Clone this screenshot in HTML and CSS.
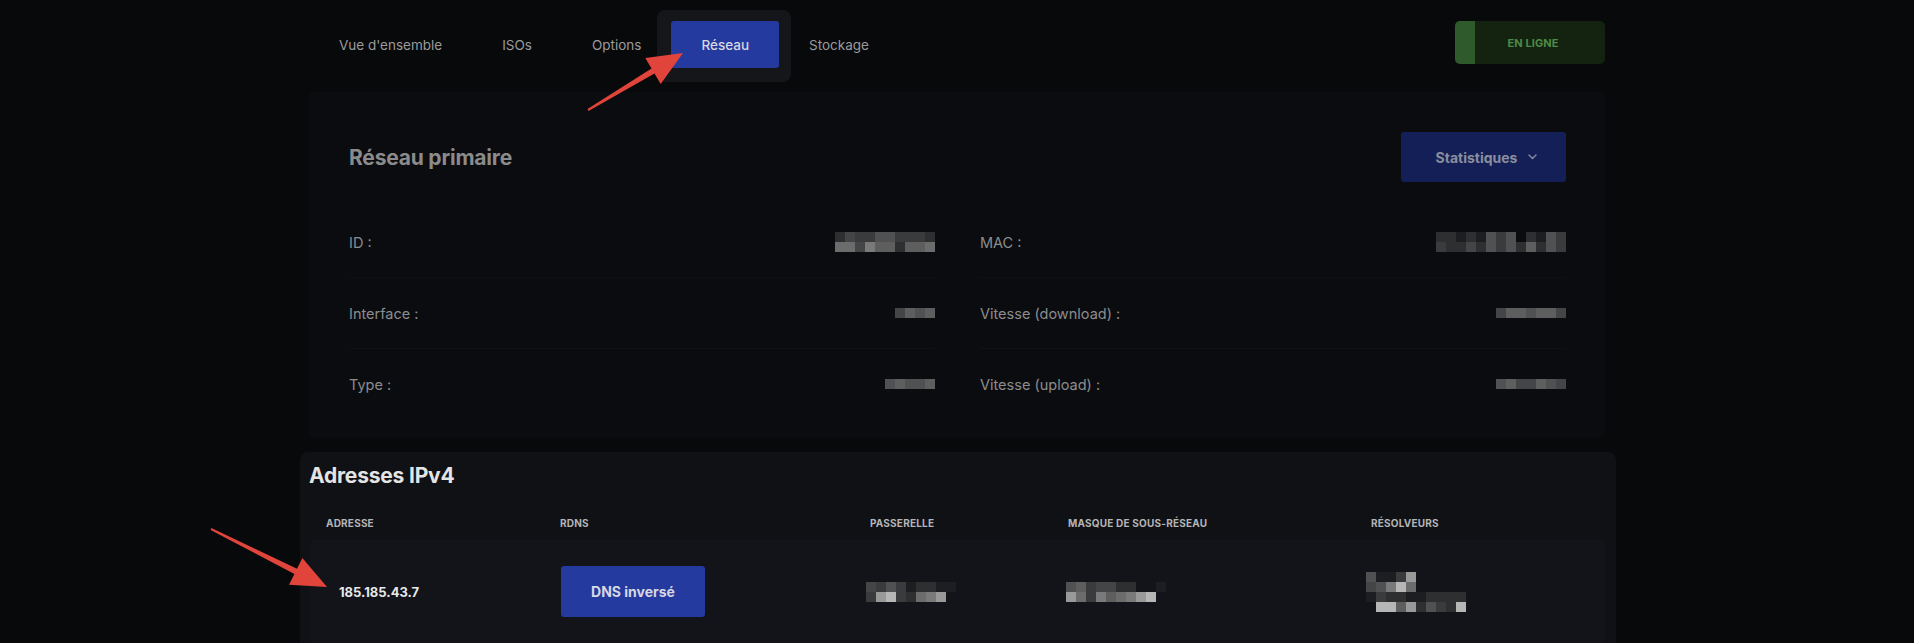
FILE: index.html
```html
<!DOCTYPE html>
<html lang="fr">
<head>
<meta charset="utf-8">
<title>Réseau</title>
<link rel="stylesheet" href="styles.css">
</head>
<body>
<div class="page">
  <header class="topbar">
    <nav class="tabs">
      <a class="tab">Vue d'ensemble</a>
      <a class="tab">ISOs</a>
      <a class="tab">Options</a>
      <span class="tab-hl"><a class="tab active">Réseau</a></span>
      <a class="tab">Stockage</a>
    </nav>
    <div class="status"><span class="status-bar"></span><span class="status-text">EN LIGNE</span></div>
  </header>

  <section class="panel">
    <div class="panel-head">
      <h2 class="panel-title">Réseau primaire</h2>
      <button class="stats-btn">Statistiques
        <svg class="chev" width="9" height="6" viewBox="0 0 9 6"><path d="M1 1l3.5 3.5L8 1" fill="none" stroke="#8a8e9e" stroke-width="1.4" stroke-linecap="round" stroke-linejoin="round"/></svg>
      </button>
    </div>
    <div class="kv-grid">
      <div class="kv"><span class="k">ID :</span>
        <span class="px c10"><i class="s2"></i><i class="s4"></i><i class="s3"></i><i class="s3"></i><i class="s5"></i><i class="s5"></i><i class="s3"></i><i class="s3"></i><i class="s3"></i><i class="s2"></i><i class="s7"></i><i class="s7"></i><i class="s4"></i><i class="s8"></i><i class="s6"></i><i class="s6"></i><i class="s2"></i><i class="s6"></i><i class="s6"></i><i class="s7"></i></span></div>
      <div class="kv"><span class="k">MAC :</span>
        <span class="px c13"><i class="s2"></i><i class="s2"></i><i class="s1"></i><i class="s2"></i><i class="s1"></i><i class="s5"></i><i class="s3"></i><i class="s5"></i><i class="s0"></i><i class="s2"></i><i class="s1"></i><i class="s5"></i><i class="s3"></i><i class="s3"></i><i class="s2"></i><i class="s2"></i><i class="s4"></i><i class="s2"></i><i class="s5"></i><i class="s3"></i><i class="s5"></i><i class="s2"></i><i class="s6"></i><i class="s2"></i><i class="s5"></i><i class="s3"></i></span></div>
      <div class="kv"><span class="k">Interface :</span>
        <span class="px c4"><i class="s4"></i><i class="s6"></i><i class="s5"></i><i class="s6"></i></span></div>
      <div class="kv"><span class="k">Vitesse (download) :</span>
        <span class="px c7"><i class="s4"></i><i class="s6"></i><i class="s6"></i><i class="s5"></i><i class="s6"></i><i class="s6"></i><i class="s4"></i></span></div>
      <div class="kv last"><span class="k">Type :</span>
        <span class="px c5"><i class="s5"></i><i class="s6"></i><i class="s5"></i><i class="s5"></i><i class="s6"></i></span></div>
      <div class="kv last"><span class="k">Vitesse (upload) :</span>
        <span class="px c7"><i class="s5"></i><i class="s6"></i><i class="s4"></i><i class="s4"></i><i class="s6"></i><i class="s5"></i><i class="s4"></i></span></div>
    </div>
  </section>

  <section class="card">
    <h2 class="card-title">Adresses IPv4</h2>
    <div class="thead">
      <span>Adresse</span>
      <span>RDNS</span>
      <span>Passerelle</span>
      <span>Masque de sous-réseau</span>
      <span>Résolveurs</span>
    </div>
    <div class="trow">
      <span class="addr">185.185.43.7</span>
      <span><button class="rdns-btn">DNS inversé</button></span>
      <span class="cell-gw"><span class="px c9"><i class="s4"></i><i class="s3"></i><i class="s5"></i><i class="s3"></i><i class="s1"></i><i class="s2"></i><i class="s2"></i><i class="s1"></i><i class="s1"></i><i class="s3"></i><i class="s9"></i><i class="s10"></i><i class="s3"></i><i class="s2"></i><i class="s7"></i><i class="s8"></i><i class="s9"></i><i class="s0"></i></span></span>
      <span class="cell-mask"><span class="px c10"><i class="s5"></i><i class="s6"></i><i class="s3"></i><i class="s4"></i><i class="s4"></i><i class="s2"></i><i class="s2"></i><i class="s0"></i><i class="s0"></i><i class="s1"></i><i class="s9"></i><i class="s7"></i><i class="s3"></i><i class="s8"></i><i class="s6"></i><i class="s7"></i><i class="s8"></i><i class="s9"></i><i class="s10"></i><i class="s0"></i></span></span>
      <span class="cell-res"><span class="px c10"><i class="s5"></i><i class="s1"></i><i class="s1"></i><i class="s3"></i><i class="s9"></i><i class="s0"></i><i class="s0"></i><i class="s0"></i><i class="s0"></i><i class="s0"></i><i class="s4"></i><i class="s5"></i><i class="s8"></i><i class="s10"></i><i class="s7"></i><i class="s0"></i><i class="s0"></i><i class="s0"></i><i class="s0"></i><i class="s0"></i><i class="s1"></i><i class="s3"></i><i class="s2"></i><i class="s2"></i><i class="s1"></i><i class="s1"></i><i class="s2"></i><i class="s2"></i><i class="s2"></i><i class="s2"></i><i class="s0"></i><i class="s10"></i><i class="s10"></i><i class="s6"></i><i class="s9"></i><i class="s2"></i><i class="s5"></i><i class="s3"></i><i class="s2"></i><i class="s10"></i></span></span>
    </div>
  </section>
</div>

<svg class="annot" width="1914" height="643" viewBox="0 0 1914 643">
  <polygon fill="#e0443a" points="587.5,109.1 651.5,68.4 645.3,58.1 683,53 660.7,83.9 654.5,73.6 588.5,110.9"/>
  <polygon fill="#e0443a" points="211.4,528.1 297,568.7 302.4,558 327,587 289,584.8 294.4,574.1 210.6,529.9"/>
</svg>
</body>
</html>
```
FILE: styles.css
```css
html, body {
  margin: 0;
  padding: 0;
  height: 643px;
  overflow: hidden;
}
body {
  position: relative;
  background: #08090b;
  font-family: Inter, "Noto Sans", "Liberation Sans", sans-serif;
  color: #8c8c8c;
}
.page {
  width: 1296px;
  margin: 0 auto;
}

/* top bar */
.topbar {
  display: flex;
  justify-content: space-between;
  align-items: flex-start;
  padding-top: 10px;
  height: 72px;
  margin-bottom: 10px;
}
.tabs {
  display: flex;
  align-items: flex-start;
}
.tab {
  display: block;
  height: 47px;
  box-sizing: border-box;
  line-height: 45px;
  padding: 2px 30px 0;
  margin-top: 11px;
  font-size: 13.5px;
  color: #9b9b9b;
  white-space: nowrap;
}
.tab-hl {
  display: block;
  background: #151619;
  border-radius: 8px;
  padding: 11px 12px 14px 14px;
  margin: 0 -12px 0 -14px;
}
.tab-hl .tab {
  margin-top: 0;
}
.tab.active {
  background: #253a9e;
  border-radius: 3px;
  color: #d8d8e0;
  font-weight: 500;
}
.status {
  display: flex;
  width: 150px;
  height: 43px;
  margin-top: 11px;
  border-radius: 5px;
  overflow: hidden;
  background: #132310;
}
.status-bar {
  width: 20px;
  background: #2f5a2c;
}
.status-text {
  flex: 1;
  display: flex;
  align-items: center;
  justify-content: center;
  padding-right: 14px;
  font-size: 11px;
  font-weight: 700;
  color: #4e8a45;
  letter-spacing: 0.1px;
}

/* primary network panel */
.panel {
  background: #0b0c10;
  border-radius: 4px;
  padding: 40px 39px 18px 40px;
}
.panel-head {
  display: flex;
  justify-content: space-between;
  align-items: center;
  height: 50px;
}
.panel-title {
  margin: 0;
  font-size: 21px;
  font-weight: 700;
  color: #8b8b8b;
  letter-spacing: -0.2px;
}
.stats-btn {
  width: 165px;
  height: 50px;
  border: 0;
  border-radius: 3px;
  background: #141f57;
  color: #8a8e9e;
  font-family: inherit;
  font-size: 14px;
  font-weight: 700;
  display: flex;
  align-items: center;
  justify-content: center;
  gap: 11px;
  padding: 0 0 0 6px;
}
.chev {
  display: block;
}
.kv-grid {
  display: grid;
  grid-template-columns: 1fr 1fr;
  column-gap: 45px;
  margin-top: 25px;
}
.kv {
  display: flex;
  justify-content: space-between;
  align-items: center;
  height: 70px;
  border-bottom: 1px solid #101116;
}
.kv.last {
  border-bottom-color: transparent;
}
.k {
  font-size: 14.5px;
  color: #8c8c8c;
}

/* pixelated values */
.px {
  display: grid;
  grid-auto-rows: 10px;
}
.px i { display: block; }
.c4 { grid-template-columns: repeat(4, 10px); }
.c5 { grid-template-columns: repeat(5, 10px); }
.c7 { grid-template-columns: repeat(7, 10px); }
.c9 { grid-template-columns: repeat(9, 10px); }
.c10 { grid-template-columns: repeat(10, 10px); }
.c13 { grid-template-columns: repeat(13, 10px); }
.s0 { background: transparent; }
.s1 { background: #1d1e21; }
.s2 { background: #2e2f31; }
.s3 { background: #3a3b3c; }
.s4 { background: #444546; }
.s5 { background: #505152; }
.s6 { background: #5e5e5f; }
.s7 { background: #6c6c6c; }
.s8 { background: #7a7a7a; }
.s9 { background: #999999; }
.s10 { background: #b6b6b6; }

/* IPv4 card */
.card {
  margin: 14px -11px 0 -9px;
  padding: 9px 11px 9px 9px;
  background: #0f1115;
  border-radius: 8px;
}
.card-title {
  margin: 0;
  height: 30px;
  line-height: 30px;
  font-size: 21px;
  font-weight: 700;
  color: #e4e4e4;
  letter-spacing: -0.2px;
}
.thead, .trow {
  display: grid;
  grid-template-columns: 234px 310px 198px 303px 1fr;
  padding-left: 17px;
}
.thead {
  margin-top: 15px;
  height: 34px;
  align-items: center;
  font-size: 10px;
  font-weight: 700;
  text-transform: uppercase;
  color: #b5b5b5;
  letter-spacing: 0.2px;
}
.trow {
  height: 103px;
  align-items: center;
  background: #121419;
  border-radius: 6px;
}
.addr {
  padding-left: 13px;
  font-size: 13px;
  font-weight: 700;
  color: #e8e8e8;
}
.rdns-btn {
  display: block;
  width: 144px;
  height: 51px;
  margin-left: 1px;
  border: 0;
  border-radius: 3px;
  background: #253a9e;
  color: #d6d8e4;
  font-family: inherit;
  font-size: 14px;
  font-weight: 700;
}
.cell-gw { margin-left: -4px; }
.cell-mask { margin-left: -2px; }
.cell-res { margin-left: -5px; }

/* annotation arrows */
.annot {
  position: absolute;
  top: 0;
  left: 0;
  pointer-events: none;
}
```
